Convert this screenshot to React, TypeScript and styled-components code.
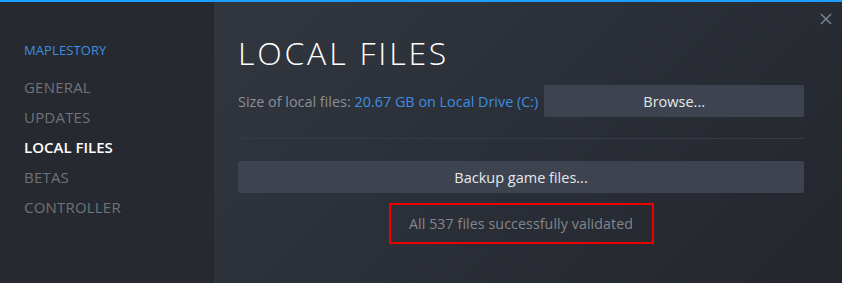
import styled, { createGlobalStyle } from "styled-components";

const GlobalStyle = createGlobalStyle`
  html, body {
    margin: 0;
    padding: 0;
    background: #23262e;
  }
  body {
    font-family: "Open Sans", "Noto Sans", Arial, sans-serif;
  }
`;

const Window = styled.div`
  position: relative;
  display: flex;
  width: 842px;
  height: 283px;
  box-sizing: border-box;
  border-top: 2px solid #1a9fff;
  overflow: hidden;
`;

const Sidebar = styled.nav`
  width: 214px;
  flex-shrink: 0;
  background: #262930;
  box-sizing: border-box;
  padding: 33px 0 0 24px;
  display: flex;
  flex-direction: column;
`;

const GameName = styled.div`
  color: #3d8ee0;
  font-size: 13px;
  line-height: 30px;
  margin-bottom: 7px;
  letter-spacing: 0.1px;
`;

const NavItem = styled.div<{ $active?: boolean }>`
  color: ${(p) => (p.$active ? "#ffffff" : "#707379")};
  font-size: 15px;
  line-height: 30px;
  font-weight: ${(p) => (p.$active ? 600 : 400)};
  letter-spacing: ${(p) => (p.$active ? "0" : "0.2px")};
`;

const Main = styled.main`
  flex: 1;
  background: linear-gradient(135deg, #32363f 0%, #2b2f37 45%, #23262d 100%);
  box-sizing: border-box;
  padding: 31px 38px 0 24px;
  display: flex;
  flex-direction: column;
`;

const Title = styled.h1`
  margin: 0;
  color: #ffffff;
  font-size: 32px;
  font-weight: 300;
  line-height: 40px;
  letter-spacing: 2.8px;
`;

const SizeRow = styled.div`
  display: flex;
  align-items: center;
  margin-top: 12px;
  height: 32px;
  gap: 6px;
`;

const SizeLabel = styled.span`
  color: #8b8f96;
  font-size: 14.4px;
  white-space: nowrap;
`;

const SizeValue = styled.span`
  color: #3d8ee0;
`;

const Button = styled.button<{ $wide?: boolean }>`
  flex: ${(p) => (p.$wide ? "none" : "1")};
  width: ${(p) => (p.$wide ? "100%" : "auto")};
  height: 32px;
  border: none;
  border-radius: 2px;
  background: #3d4450;
  color: #e6e9ec;
  font-family: inherit;
  font-size: 14.5px;
  padding: 0;
`;

const Divider = styled.div`
  height: 1px;
  background: #373b44;
  margin: 21px 0 22px;
`;

const Status = styled.div`
  align-self: center;
  margin-top: 10px;
  width: 265px;
  height: 41px;
  box-sizing: border-box;
  border: 2px solid #ee0000;
  display: flex;
  align-items: center;
  justify-content: center;
  color: #83878d;
  font-size: 14.2px;
  letter-spacing: 0.1px;
`;

const Close = styled.div`
  position: absolute;
  top: 6px;
  right: 10px;
  width: 12px;
  height: 12px;
`;

export default function App() {
  return (
    <>
      <GlobalStyle />
      <Window>
        <Sidebar>
          <GameName>MAPLESTORY</GameName>
          <NavItem>GENERAL</NavItem>
          <NavItem>UPDATES</NavItem>
          <NavItem $active>LOCAL FILES</NavItem>
          <NavItem>BETAS</NavItem>
          <NavItem>CONTROLLER</NavItem>
        </Sidebar>
        <Main>
          <Title>LOCAL FILES</Title>
          <SizeRow>
            <SizeLabel>
              Size of local files: <SizeValue>20.67 GB on Local Drive (C:)</SizeValue>
            </SizeLabel>
            <Button>Browse...</Button>
          </SizeRow>
          <Divider />
          <Button $wide>Backup game files...</Button>
          <Status>All 537 files successfully validated</Status>
        </Main>
        <Close>
          <svg width="12" height="12" viewBox="0 0 12 12">
            <path d="M1 1 L11 11 M11 1 L1 11" stroke="#7d848c" strokeWidth="1.5" />
          </svg>
        </Close>
      </Window>
    </>
  );
}
